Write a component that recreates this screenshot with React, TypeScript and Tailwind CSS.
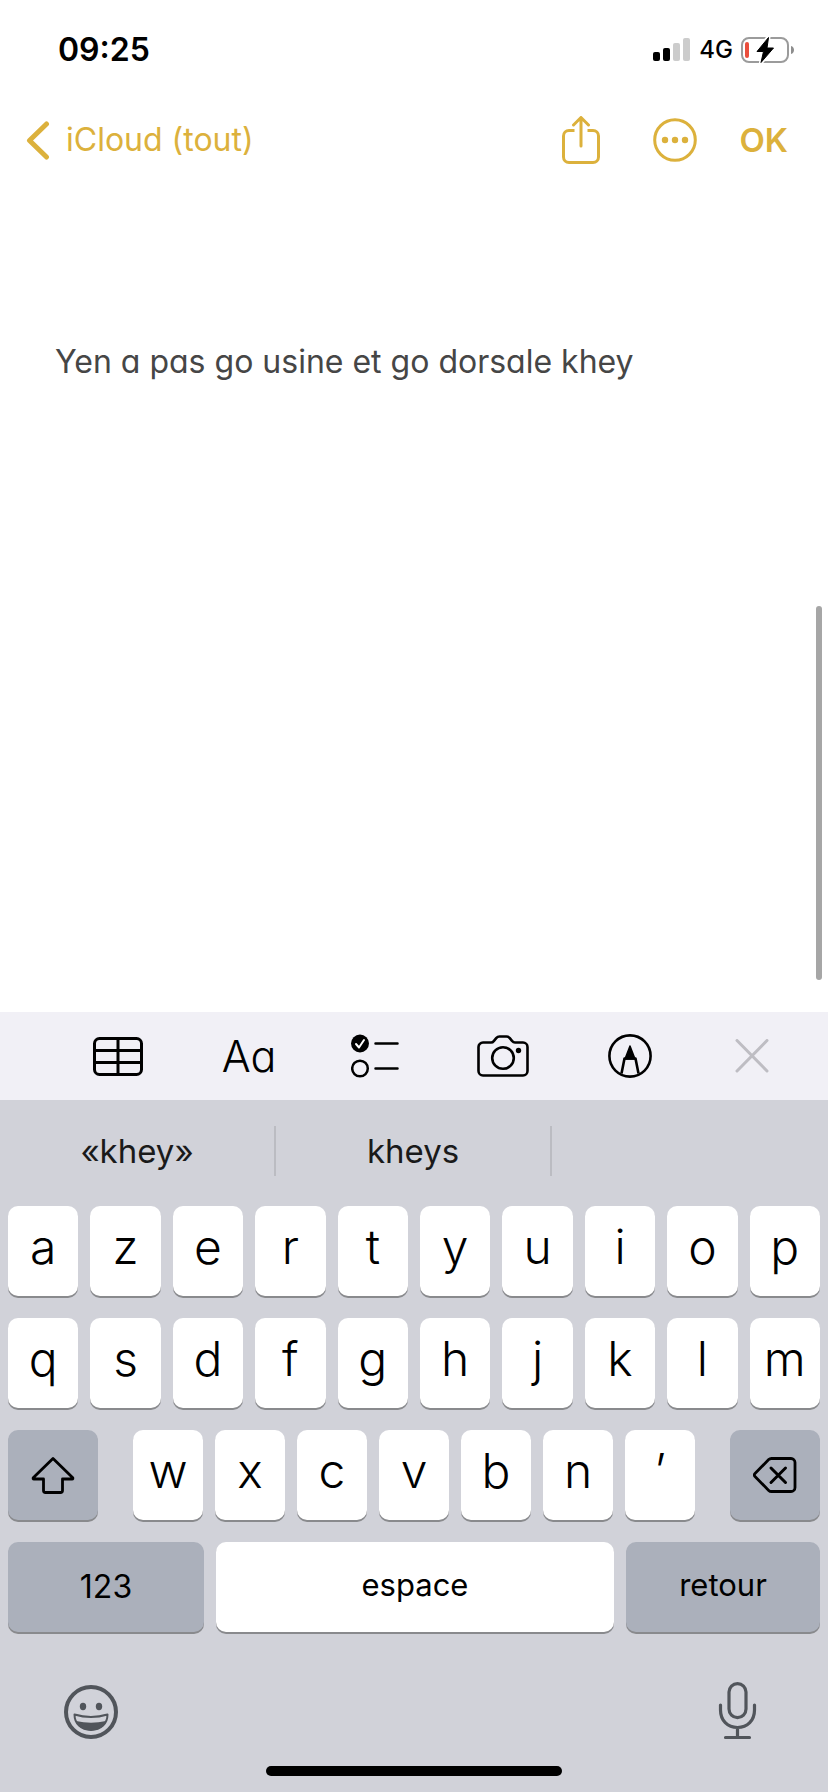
import React, { useState } from "react";

const ROW_1 = ["a", "z", "e", "r", "t", "y", "u", "i", "o", "p"]
const ROW_2 = ["q", "s", "d", "f", "g", "h", "j", "k", "l", "m"]
const ROW_3 = ["w", "x", "c", "v", "b", "n", "’"]
const SUGGESTIONS = ["«khey»", "kheys", ""]

// clock, signal, network and battery
function StatusBar() {
  return (
    <div className="flex h-24 items-center justify-between pt-1 pl-[58px] pr-[33px]">
      <span className="text-[32px] leading-10 font-semibold">09:25</span>
      <div className="flex items-center gap-2">
        <svg className="h-6 w-[38px]" viewBox="0 0 38 24" aria-label="Signal">
          <rect x="0" y="14" width="7" height="9" rx="2" />
          <rect x="10" y="10" width="7" height="13" rx="2" />
          <rect x="20" y="5" width="7" height="18" rx="2" fill="#cccccc" />
          <rect x="30" y="0" width="7" height="23" rx="2" fill="#cccccc" />
        </svg>
        <span className="text-[24px] leading-8 font-medium">4G</span>
        <svg className="h-[26px] w-[54px]" viewBox="0 0 54 26" aria-label="Battery">
          <rect x="1" y="1" width="46" height="24" rx="7" fill="none" stroke="#9b9b9b" strokeWidth="2" />
          <path d="M50 9c4 1 4 7 0 8z" fill="#8e8e8e" />
          <rect x="4" y="5" width="4" height="16" rx="2" fill="#ea4e3d" />
          <path
            d="M27.500 0 16 14.500h6.500L20 25.500 32.500 11h-6.500z"
            stroke="#ffffff" strokeWidth="4" strokeLinejoin="round"
          />
          <path d="M27.500 0.500 16 14.500h6.500L20 25.500 32.500 11h-6.500z" stroke="#000000" strokeWidth="1" strokeLinejoin="round" />
        </svg>
      </div>
    </div>
  )
}

function NavBar() {
  return (
    <header className="flex h-[88px] items-center justify-between pl-[26px] pr-10 text-[#dcb13c]">
      <button className="flex items-center gap-4 text-[32px] leading-10">
        <svg className="h-10 w-6" viewBox="0 0 24 40" fill="none" stroke="currentColor" strokeWidth="5" strokeLinecap="round" strokeLinejoin="round">
          <path d="M20.500 4 3.500 20.500l17 16.500" />
        </svg>
        iCloud (tout)
      </button>
      <div className="flex items-center">
        <button aria-label="Partager" className="mr-[53px]">
          <svg className="h-12 w-[38px]" viewBox="0 1 38 48" fill="none" stroke="currentColor" strokeWidth="3" strokeLinecap="round" strokeLinejoin="round">
            <path d="M19 31V3M11.500 10 19 2.500 26.500 10" />
            <path d="M12.500 15.500H7A5.500 5.500 0 0 0 1.500 21v21A5.500 5.500 0 0 0 7 47.500h24a5.500 5.500 0 0 0 5.500-5.500V21a5.500 5.500 0 0 0-5.500-5.500h-5.500" strokeLinecap="butt" />
          </svg>
        </button>
        <button aria-label="Plus" className="mr-[42px]">
          <svg className="size-11" viewBox="0 0 44 44">
            <circle cx="22" cy="22" r="20.300" fill="none" stroke="currentColor" strokeWidth="3" />
            <g fill="currentColor">
              <circle cx="12" cy="22" r="3.200" />
              <circle cx="22" cy="22" r="3.200" />
              <circle cx="32" cy="22" r="3.200" />
            </g>
          </svg>
        </button>
        <button className="text-[33px] leading-10 font-semibold">OK</button>
      </div>
    </header>
  )
}

// formatting tools, sits right above the keyboard
function Toolbar() {
  return (
    <div className="flex h-[88px] items-center justify-between bg-[#f1f0f6] pl-[93px] pr-[59px]">
      <button aria-label="Tableau">
        <svg className="h-10 w-[50px]" viewBox="0 0 50 40" fill="none" stroke="#000000" strokeWidth="3">
          <rect x="1.500" y="2.500" width="47" height="36" rx="5" />
          <path d="M25 2.500v36M1.500 14.500h47M1.500 26.500h47" />
        </svg>
      </button>
      <button
        aria-label="Format"
        className="w-[50px] text-[43px] leading-[48px] font-light whitespace-nowrap [font-feature-settings:'cv11']"
      >
        Aa
      </button>
      <button aria-label="Liste">
        <svg className="h-11 w-12" viewBox="0 0 48 44" fill="none" strokeLinecap="round" strokeLinejoin="round">
          <circle cx="9" cy="9.500" r="9" fill="#000000" />
          <path d="M5 10l3 3.500L13 6" stroke="#ffffff" strokeWidth="2" />
          <circle cx="9" cy="34.500" r="7.800" stroke="#000000" strokeWidth="2.500" />
          <path d="M24.500 9.500h22M24.500 34.500h22" stroke="#000000" strokeWidth="2.500" />
        </svg>
      </button>
      <button aria-label="Appareil photo">
        <svg className="h-11 w-[52px]" viewBox="0 0 52 44" fill="none" stroke="#000000" strokeWidth="2.600" strokeLinejoin="round">
          <path d="M6 8.500h8c1.500 0 2-.5 3-1.700l2.200-2.600C20.200 3 21 2.500 22.500 2.500h7c1.500 0 2.300.5 3.300 1.700L35 6.800c1 1.200 1.500 1.700 3 1.700h8a4.500 4.500 0 0 1 4.500 4.500v24a4.500 4.500 0 0 1-4.500 4.500H6A4.500 4.500 0 0 1 1.500 37V13A4.500 4.500 0 0 1 6 8.500z" />
          <circle cx="26" cy="24" r="10.800" />
          <circle cx="41.500" cy="16.500" r="2.700" fill="#000000" stroke="none" />
        </svg>
      </button>
      <button aria-label="Dessin">
        <svg className="size-11" viewBox="0 0 44 44" fill="none" stroke="#000000" strokeWidth="2.600" strokeLinejoin="round">
          <circle cx="22" cy="22" r="20.600" />
          <path d="M13.500 39.500 16.500 24.500h11l3 15" />
          <path d="M22 12 17 25h10z" fill="#000000" strokeWidth="1.500" />
        </svg>
      </button>
      <button aria-label="Fermer" className="pl-1">
        <svg className="size-[34px]" viewBox="0 0 34 34" fill="none" stroke="#bebdc3" strokeWidth="3" strokeLinecap="round">
          <path d="M2 1.500l30 30.500M32 1.500l-30 30.500" />
        </svg>
      </button>
    </div>
  )
}

type KeyProps = {
  children: React.ReactNode
  label?: string
  className?: string
  onPress?: () => void
}

// white letter key
function LetterKey({ children, label, className = "", onPress }: KeyProps) {
  return (
    <button
      aria-label={label}
      onClick={onPress}
      className={`flex h-[90px] items-center justify-center rounded-[10px] bg-white shadow-[0_2px_0_#898a8d] ${className}`}
    >
      {children}
    </button>
  )
}

// darker key: shift, delete, 123, return
function ActionKey({ children, label, className = "", onPress }: KeyProps) {
  return (
    <button
      aria-label={label}
      onClick={onPress}
      className={`flex h-[90px] items-center justify-center rounded-[10px] bg-[#abb0bb] shadow-[0_2px_0_#898a8d] ${className}`}
    >
      {children}
    </button>
  )
}

type KeyboardProps = {
  onType: (text: string) => void
  onDelete: () => void
}

function Keyboard({ onType, onDelete }: KeyboardProps) {
  const letters = (row: string[]) =>
    row.map((k) => (
      <LetterKey key={k} className="pb-2 text-[48px] leading-none font-[350]" onPress={() => onType(k)}>
        {k}
      </LetterKey>
    ))

  return (
    <div className="bg-[#d1d2d9]">
      <div className="grid h-[102px] grid-cols-3 items-center">
        {SUGGESTIONS.map((word, i) => (
          <button
            key={i}
            className={`h-[50px] text-[33px] leading-10 text-[#1a1a1a] ${i < 2 ? "border-r-2 border-[#bbbcc2]" : ""}`}
            onClick={() => onType(word)}
          >
            {word}
          </button>
        ))}
      </div>

      <div className="flex flex-col gap-[22px] px-2 pt-1">
        <div className="grid grid-cols-10 gap-3">{letters(ROW_1)}</div>
        <div className="grid grid-cols-10 gap-3">{letters(ROW_2)}</div>
        <div className="flex gap-[35px]">
          <ActionKey label="Majuscule" className="w-[90px]">
            <svg className="h-10 w-11" viewBox="0 0 44 40" fill="none" stroke="#000000" strokeWidth="2.800" strokeLinejoin="round">
              <path d="M22 3.500 2.500 22.500c-.8.900-.4 1.500.5 1.500h9.500v11.500a2 2 0 0 0 2 2h15a2 2 0 0 0 2-2V24H41c.9 0 1.300-.6.500-1.500z" />
            </svg>
          </ActionKey>
          <div className="grid flex-1 grid-cols-7 gap-3">{letters(ROW_3)}</div>
          <ActionKey label="Supprimer" className="w-[90px]" onPress={onDelete}>
            <svg className="h-10 w-11" viewBox="0 0 44 40" fill="none" stroke="#000000" strokeWidth="2.800" strokeLinecap="round" strokeLinejoin="round">
              <path d="M18.500 3.500H38a4 4 0 0 1 4 4v25a4 4 0 0 1-4 4H18.500c-1.200 0-2-.3-2.800-1.100L2 21.500c-1-1-1-2 0-3L15.700 4.600c.8-.8 1.600-1.100 2.800-1.100z" />
              <path d="M18 13 32.500 27.500M32.500 13 18 27.500" strokeWidth="3" />
            </svg>
          </ActionKey>
        </div>
        <div className="flex gap-3">
          <ActionKey className="w-[196px] text-[32px] leading-10">123</ActionKey>
          <LetterKey className="flex-1 pb-1 text-[31px] leading-10" onPress={() => onType(" ")}>espace</LetterKey>
          <ActionKey className="w-[194px] pb-1 text-[31px] leading-10" onPress={() => onType("\n")}>retour</ActionKey>
        </div>
      </div>

      <div className="flex items-center justify-between px-16 pt-[50px] pb-[26px]">
        <button aria-label="Emoji">
          <svg className="h-[58px] w-[54px]" viewBox="0 -1 54 58" fill="none" stroke="#51555b">
            <circle cx="27" cy="29" r="25" strokeWidth="4" />
            <ellipse cx="19" cy="23.500" rx="3.200" ry="3.700" fill="#51555b" stroke="none" />
            <ellipse cx="35" cy="23.500" rx="3.200" ry="3.700" fill="#51555b" stroke="none" />
            <path d="M10.500 31.500q16.500 5 33 0c0 9-6.500 15.500-16.500 15.500s-16.500-6.500-16.500-15.500z" strokeWidth="2" strokeLinejoin="round" />
            <path d="M12 38q15 3.500 30 0c-2.500 6-8 9.500-15 9.500S14.500 44 12 38z" fill="#51555b" stroke="none" />
          </svg>
        </button>
        <button aria-label="Dictée">
          <svg className="h-[58px] w-[54px]" viewBox="0 0 54 58" fill="none" stroke="#51555b" strokeWidth="3.200" strokeLinecap="round">
            <rect x="19" y="1.600" width="17" height="34" rx="8.500" />
            <path d="M10.500 23v5c0 10.500 7 17.500 17 17.500s17-7 17-17.500v-5M27.500 45.500v10M15.500 55.500h24" />
          </svg>
        </button>
      </div>

      <div className="flex justify-center pb-4">
        <div className="h-[10px] w-[296px] rounded-full bg-black" />
      </div>
    </div>
  )
}

export default function App() {
  const [note, setNote] = useState("Yen a pas go usine et go dorsale khey")

  return (
    <div className="flex min-h-screen flex-col bg-white font-['Inter','Liberation_Sans',sans-serif] text-black">
      <StatusBar />
      <NavBar />
      <main className="relative flex flex-1 flex-col pt-[156px]">
        <textarea
          aria-label="Note"
          value={note}
          onChange={(e) => setNote(e.target.value)}
          className="w-full flex-1 resize-none px-[55px] text-[32px] leading-[44px] text-[#464646] outline-none [font-feature-settings:'cv11']"
        />
        {/* scroll indicator */}
        <div className="absolute right-[6px] bottom-8 h-[374px] w-[6px] rounded-full bg-[#a6a6a6]" />
      </main>
      <Toolbar />
      <Keyboard onType={(text) => setNote((prev) => prev + text)} onDelete={() => setNote((prev) => prev.slice(0, -1))} />
    </div>
  )
}
